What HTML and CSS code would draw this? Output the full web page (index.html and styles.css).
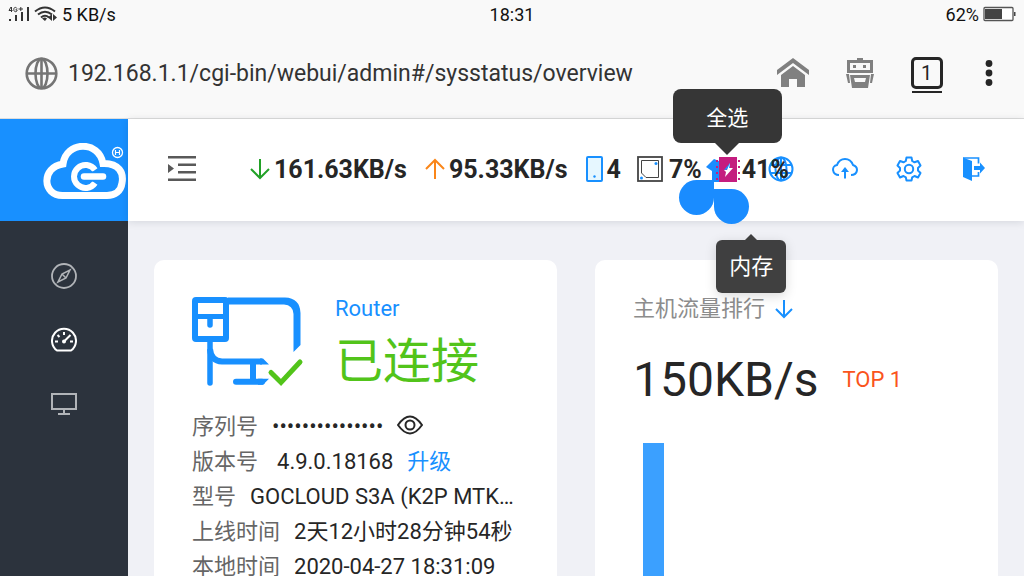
FILE: index.html
```html
<!DOCTYPE html>
<html lang="zh-CN">

<head>
    <meta charset="UTF-8">
    <meta name="viewport" content="width=device-width, initial-scale=1">
    <title>系统状态</title>
    <link rel="stylesheet" href="styles.css">
</head>

<body>
    <!-- 手机状态栏 -->
    <div class="phone-bar">
        <div class="phone-left">
            <svg width="22" height="16" viewBox="0 0 22 16">
                <g fill="none" stroke="#333" stroke-width="1">
                    <path d="M3 1L1 4.500H4.500M3.500 1V6M9 2.500C8 .8 5.800 1 5.800 3.500S8 6.200 9 5V3.800H7.500M10.500 3H15M12.800 1V5" />
                </g>
                <path fill="#333" d="M1 13h2v2H1zM7 9h2v6H7zM13 6h2v9h-2zM19 1h2v14h-2z" />
            </svg>
            <svg width="24" height="16" viewBox="0 0 24 16">
                <g fill="none" stroke="#333" stroke-width="2">
                    <path d="M1 5.500Q11 -2.500 21 5.500M4 8.500Q11 3 18 8.500M7 11.500Q11 8 15 11.500" />
                </g>
                <path fill="#333" d="M8 12.500Q11 10.500 13 12.500L11 15zM18 8v7l-4-3.500zM19 8v7l4-3.500z" />
            </svg>
            <span>5 KB/s</span>
        </div>
        <span class="phone-time">18:31</span>
        <div class="phone-right">
            <span>62%</span>
            <svg width="33" height="16" viewBox="0 0 33 16">
                <rect x="1" y="1.500" width="29" height="13" rx="1" fill="#fff" stroke="#555" stroke-width="1.300" />
                <path fill="#444" d="M2 3h17v10H2zM31 6h1.500v4H31z" />
            </svg>
        </div>
    </div>

    <!-- 地址栏 -->
    <div class="browser-bar">
        <svg class="site-icon" width="33" height="33" viewBox="0 0 33 33" fill="none" stroke="#757575" stroke-width="2.600">
            <circle cx="16.500" cy="16.500" r="14.800" />
            <ellipse cx="16.500" cy="16.500" rx="6" ry="14.800" />
            <path d="M2 16.500H31M16.500 2V31" />
        </svg>
        <input class="url" type="text" aria-label="网址" value="192.168.1.1/cgi-bin/webui/admin#/sysstatus/overview">
        <button class="tool" aria-label="主页">
            <svg width="34" height="32" viewBox="0 0 34 32" fill="#808080">
                <path d="M17 1L33 13V18L17 6L1 18V13z" />
                <path d="M17 9L29 18V30H21V22H13V30H5V18z" />
            </svg>
        </button>
        <button class="tool" aria-label="助手">
            <svg width="30" height="32" viewBox="0 0 30 32" fill="#808080">
                <path d="M12 1h6v3h-6z" />
                <path fill-rule="evenodd" d="M2 3h26v13H2zM5 6v7h20V6z" />
                <path d="M8 8h3v3H8zM18 8h3v3h-3zM1 17h3l1 9H3zM29 17h-3l-1 9h2z" />
                <path fill-rule="evenodd" d="M5 18h20l-2 13H7zM9 21l1 4h10l1-4z" />
            </svg>
        </button>
        <button class="tool" aria-label="标签页">
            <span class="tab-count">1</span>
        </button>
        <button class="tool tool-more" aria-label="更多">
            <svg width="8" height="28" viewBox="0 0 8 28" fill="#262626">
                <circle cx="4" cy="4.500" r="3.400" />
                <circle cx="4" cy="14" r="3.400" />
                <circle cx="4" cy="23.500" r="3.400" />
            </svg>
        </button>
    </div>

    <div class="layout">
        <aside class="sider">
            <a class="logo" href="#" aria-label="GOCLOUD">
                <svg width="84" height="58" viewBox="0 0 84 58" fill="none" stroke="#fff">
                    <path stroke-width="7" d="M20 52.500C-1 53 -2 24 20 21C23 -2 56 -3 60 20.500C76 20 81 30 79 40C78 48 72 52.500 64 52.500z" />
                    <path stroke-width="6" d="M52 27A11.500 11.500 0 1 0 52 40" />
                    <path stroke="#1890ff" stroke-width="10" d="M42 33.500H58" />
                    <path stroke-width="6.500" stroke-linecap="round" d="M41 33.500H60" />
                    <circle cx="74.500" cy="9.500" r="5" stroke-width="1.300" />
                    <path stroke-width="1.200" d="M72.500 7V12M76.500 7V12M72.500 9.500H76.500" />
                </svg>
            </a>
            <nav class="menu">
                <a href="#" aria-label="导航">
                    <svg width="26" height="26" viewBox="0 0 26 26" fill="none" stroke="currentColor">
                        <circle cx="13" cy="13" r="12" stroke-width="1.800" />
                        <path stroke-width="1.600" d="M19 7L15 15L7 19L11 11zM11 11L15 15" />
                    </svg>
                </a>
                <a class="active" href="#" aria-label="系统状态">
                    <svg width="26" height="26" viewBox="0 0 26 26" fill="none" stroke="currentColor" stroke-width="2">
                        <path d="M6 23.500A12 12 0 1 1 20 23.500z" />
                        <path d="M4 14.500H7M19 14.500H22M13 5V8M6.500 8L8.500 10M19.500 8L13 14.500" />
                        <circle cx="13" cy="14.500" r="1" />
                    </svg>
                </a>
                <a href="#" aria-label="设备">
                    <svg width="26" height="26" viewBox="0 0 26 26" fill="none" stroke="currentColor" stroke-width="2">
                        <path d="M1 3H25V18H1zM13 18V22M7 23H19" />
                    </svg>
                </a>
            </nav>
        </aside>

        <div class="page">
            <header class="header">
                <button class="fold" aria-label="展开菜单">
                    <svg width="30" height="28" viewBox="0 0 30 28" fill="#595959">
                        <path d="M1 1h28v2.500H1zM11 8.500h18V11H11zM11 16h18v2.500H11zM1 23.500h28V26H1zM1 9l6 4.500-6 4.500z" />
                    </svg>
                </button>
                <div class="stats">
                    <div class="stat">
                        <svg width="24" height="26" viewBox="0 0 24 26" fill="none" stroke="#22a127" stroke-width="2">
                            <path d="M12 3V22M3 13L12 22L21 13" />
                        </svg>
                        <span>161.63KB/s</span>
                    </div>
                    <div class="stat">
                        <svg width="24" height="26" viewBox="0 0 24 26" fill="none" stroke="#fa8619" stroke-width="2">
                            <path d="M12 23V4M3 13L12 4L21 13" />
                        </svg>
                        <span>95.33KB/s</span>
                    </div>
                    <div class="stat">
                        <svg width="21" height="26" viewBox="0 0 21 26">
                            <rect x="3" y="1" width="15" height="24" rx="1" fill="#e6f7ff" stroke="#1890ff" stroke-width="2" />
                            <circle cx="10.500" cy="20.500" r="1.200" fill="#1890ff" />
                        </svg>
                        <span>4</span>
                    </div>
                    <div class="stat stat-cpu">
                        <svg width="26" height="26" viewBox="0 0 26 26" fill="none" stroke="#444">
                            <rect x="1" y="1" width="24" height="24" stroke-width="1.800" />
                            <path d="M4.500 4.500H21.500V21.500H9L4.500 17z" />
                            <circle cx="19" cy="7.500" r="1.500" fill="#1890ff" stroke="none" />
                            <circle cx="4.500" cy="22" r="1.500" fill="#1890ff" stroke="none" />
                        </svg>
                        <span>7%</span>
                    </div>
                    <div class="stat stat-memory">
                        <div class="selection">
                            <svg width="28" height="26" viewBox="0 0 28 26">
                                <path fill="#c41d7f" d="M5 1h18v25H5zM2 4h2v2H2zM2 10h2v2H2zM2 16h2v2H2zM2 22h2v2H2zM24 4h2v2h-2zM24 10h2v2h-2zM24 16h2v2h-2zM24 22h2v2h-2z" />
                                <path fill="#1890ff" d="M16 7v6l-6 1z" />
                                <path fill="#fff" d="M16 7l-3 7h-3l2 2-1 5 8-9h-4z" />
                            </svg>
                            <svg class="caret" width="14" height="24" viewBox="0 0 14 24" fill="#1a8cff">
                                <path d="M8 1L13 3V24H6V13L0 9z" />
                            </svg>
                            <i class="handle handle-start"></i>
                            <i class="handle handle-end"></i>
                            <button class="select-all">全选</button>
                        </div>
                        <span>41%</span>
                        <div class="tooltip" role="tooltip">内存</div>
                    </div>
                </div>
                <nav class="actions">
                    <a href="#" aria-label="语言">
                        <svg width="26" height="26" viewBox="0 0 26 26" fill="none" stroke="#1890ff" stroke-width="2">
                            <circle cx="13" cy="13" r="11.500" />
                            <ellipse cx="13" cy="13" rx="5.500" ry="11.500" />
                            <path d="M13 1V25M2 9H24M2 17H24" />
                        </svg>
                    </a>
                    <a href="#" aria-label="云端">
                        <svg width="26" height="26" viewBox="0 0 26 26" fill="none" stroke="#1890ff" stroke-width="2">
                            <path d="M7 19C0 19 -1 10 5 9C8 1 18 1 21 9C27 11 26 19 19 19M13 22.500V13" />
                            <path fill="#1890ff" stroke="none" d="M13 11l4 5H9z" />
                        </svg>
                    </a>
                    <a href="#" aria-label="设置">
                        <svg width="26" height="26" viewBox="0 0 26 26" fill="none" stroke="#1890ff" stroke-width="2" stroke-linejoin="round">
                            <path d="M10.500 1.500H15.500L16.200 5L18.500 6.300L22 5L24.500 9.500L22 12V14.500L24.500 17L22 21.500L18.500 20L16.200 21.300L15.500 24.500H10.500L9.800 21.300L7.500 20L4 21.500L1.500 17L4 14.500V12L1.500 9.500L4 5L7.500 6.300L9.800 5z" />
                            <circle cx="13" cy="13" r="4.200" />
                        </svg>
                    </a>
                    <a href="#" aria-label="退出">
                        <svg width="26" height="26" viewBox="0 0 26 26" fill="#1890ff">
                            <path d="M3 1.500L12 5V25L3 21zM14 10h6V6.500l5 5.500-5 5.500V14h-6z" />
                            <path fill="none" stroke="#1890ff" stroke-width="1.700" d="M3 2H18.500V7.500M18.500 16V20H12" />
                        </svg>
                    </a>
                </nav>
            </header>

            <main class="content">
                <section class="card">
                    <div class="router">
                        <svg class="router-icon" width="112" height="92" viewBox="0 0 112 92" fill="none" stroke="#1890ff" stroke-width="6">
                            <rect x="3" y="3" width="31" height="39" rx="1" />
                            <path d="M3 19.500H34" stroke-width="5" />
                            <path d="M18 20V28M18 42V86" stroke-width="5.500" stroke-linecap="round" />
                            <path d="M18 52Q19 64 30 64.500H70M61 64V86" />
                            <path d="M44 84.700H70" stroke-linecap="round" />
                            <path fill="#1890ff" stroke="none" d="M36 .5H93Q108 1 108.500 16V48L101.500 55V17Q101 8 92 7.500H36zM68 61.500H71L77 67.500H68zM66 81.700H77L71 87.700H66z" />
                            <path stroke="#52c41a" stroke-width="5" stroke-linecap="round" d="M79 75.500L89 85.500L108 65" />
                        </svg>
                        <div>
                            <h2 class="router-name">Router</h2>
                            <p class="router-state">已连接</p>
                        </div>
                    </div>
                    <dl class="info">
                        <div class="row">
                            <dt>序列号</dt>
                            <dd>•••••••••••••••</dd>
                            <dd>
                                <button class="eye" aria-label="显示序列号">
                                    <svg width="26" height="22" viewBox="0 0 26 22" fill="none" stroke="#262626" stroke-width="2">
                                        <path d="M1 11Q13 -6 25 11Q13 28 1 11z" />
                                        <circle cx="13" cy="11" r="4.500" />
                                    </svg>
                                </button>
                            </dd>
                        </div>
                        <div class="row row-version">
                            <dt>版本号</dt>
                            <dd>4.9.0.18168</dd>
                            <dd><a href="#">升级</a></dd>
                        </div>
                        <div class="row">
                            <dt>型号</dt>
                            <dd class="model">GOCLOUD S3A (K2P MTK7621)</dd>
                        </div>
                        <div class="row">
                            <dt>上线时间</dt>
                            <dd>2天12小时28分钟54秒</dd>
                        </div>
                        <div class="row">
                            <dt>本地时间</dt>
                            <dd>2020-04-27 18:31:09</dd>
                        </div>
                    </dl>
                </section>

                <section class="card">
                    <h2 class="rank-title">主机流量排行
                        <svg width="20" height="20" viewBox="0 0 20 20" fill="none" stroke="#1890ff" stroke-width="2">
                            <path d="M10 1V18M2 10L10 18L18 10" />
                        </svg>
                    </h2>
                    <p class="rank-value"><span>150KB/s</span><em>TOP 1</em></p>
                    <div class="chart">
                        <div class="bar"></div>
                    </div>
                </section>
            </main>
        </div>
    </div>
</body>

</html>
```

FILE: styles.css
```css
* {
    padding: 0;
    margin: 0;
    box-sizing: border-box;
}

body {
    display: flex;
    flex-direction: column;
    height: 100vh;
    overflow: hidden;
    font-family: Roboto, "Noto Sans CJK SC", sans-serif;
    font-size: 22px;
    color: #262626;
    background: #f9f9f9;
}

svg {
    display: block;
    flex: none;
}

a {
    color: #1890ff;
    text-decoration: none;
}

button {
    border: 0;
    background: none;
    font: inherit;
    color: inherit;
    cursor: pointer;
}

/* 手机状态栏 */
.phone-bar {
    display: grid;
    grid-template-columns: 1fr auto 1fr;
    align-items: center;
    height: 28px;
    padding: 0 8px;
    font-size: 18px;
    color: #111;
}

.phone-left,
.phone-right {
    display: flex;
    align-items: center;
    gap: 4px;
}

.phone-right {
    justify-content: flex-end;
}

/* 地址栏 */
.browser-bar {
    display: flex;
    align-items: center;
    height: 91px;
    padding: 0 6px 0 25px;
    border-bottom: 1px solid #ddd;
}

.url {
    flex: 1;
    min-width: 0;
    margin-left: 10px;
    border: 0;
    outline: none;
    background: none;
    font: inherit;
    font-size: 23px;
    color: #333;
}

.tool {
    display: flex;
    justify-content: center;
    width: 67px;
}

.tool-more {
    width: 58px;
}

.tab-count {
    position: relative;
    width: 32px;
    height: 32px;
    border: 3px solid #262626;
    border-radius: 5px;
    line-height: 26px;
    font-size: 20px;
}

.tab-count::after {
    content: "";
    position: absolute;
    left: -2px;
    right: -2px;
    bottom: -7px;
    height: 2px;
    background: #262626;
}

/* 整体布局 */
.layout {
    display: flex;
    flex: 1;
    min-height: 0;
}

.sider {
    flex: none;
    width: 128px;
    background: #2c333d;
}

.logo {
    display: flex;
    justify-content: flex-end;
    align-items: center;
    height: 102px;
    padding: 3px 1px 0 0;
    background: #1890ff;
}

.menu {
    padding-top: 23px;
}

.menu a {
    display: flex;
    justify-content: center;
    align-items: center;
    height: 64px;
    color: #b1b4b8;
}

.menu .active {
    color: #fff;
}

.page {
    display: flex;
    flex-direction: column;
    flex: 1;
    min-width: 0;
    background: #f0f1f6;
}

/* 顶部 */
.header {
    display: flex;
    align-items: center;
    flex: none;
    height: 102px;
    padding: 0 19px 2px 39px;
    background: #fff;
    box-shadow: 0 1px 8px rgba(0, 21, 41, .12);
}

.stats {
    position: relative;
    z-index: 1;
    display: flex;
    flex: 1;
    gap: 16px;
    min-width: 0;
    padding-left: 51px;
    white-space: nowrap;
}

.stat {
    display: flex;
    align-items: center;
    flex: none;
    gap: 2px;
    font-size: 25px;
    font-weight: bold;
}

.stat-cpu {
    gap: 6px;
}

.stat-memory {
    position: relative;
    gap: 0;
    margin-left: -4px;
}

.selection {
    position: relative;
}

.actions {
    display: flex;
    flex: none;
}

.actions a {
    display: flex;
    justify-content: center;
    width: 64px;
}

/* 文字选择手柄和弹出菜单 */
.caret {
    position: absolute;
    left: -8px;
    top: 2px;
    z-index: -1;
}

.handle {
    position: absolute;
    width: 35px;
    height: 35px;
    border-radius: 50%;
    background: #1a8cff;
}

.handle-start {
    right: 28px;
    top: 24px;
    border-top-right-radius: 0;
}

.handle-end {
    left: 0;
    top: 33px;
    border-top-left-radius: 0;
}

.select-all {
    position: absolute;
    left: 50%;
    bottom: 39px;
    width: 109px;
    height: 54px;
    margin-left: -55px;
    border-radius: 8px;
    background: #363636;
    color: #fff;
    font-size: 21px;
    font-weight: normal;
}

.select-all::after {
    content: "";
    position: absolute;
    left: 50%;
    top: 100%;
    margin-left: -12px;
    border: 12px solid transparent;
    border-bottom: 0;
    border-top-color: #363636;
}

.tooltip {
    position: absolute;
    left: 50%;
    top: 85px;
    width: 70px;
    margin-left: -35px;
    padding: 10px 0;
    border-radius: 6px;
    background: rgba(50, 50, 50, .93);
    box-shadow: 0 3px 12px rgba(0, 0, 0, .15);
    color: #fff;
    font-size: 22px;
    font-weight: normal;
    line-height: 33px;
    text-align: center;
}

.tooltip::before {
    content: "";
    position: absolute;
    left: 50%;
    bottom: 100%;
    margin-left: -6px;
    border: 6px solid transparent;
    border-top: 0;
    border-bottom-color: rgba(50, 50, 50, .93);
}

/* 内容卡片 */
.content {
    display: grid;
    grid-template-columns: 1fr 1fr;
    gap: 38px;
    flex: 1;
    min-height: 0;
    padding: 39px 26px 0;
    overflow: hidden;
}

.card {
    min-width: 0;
    padding: 34px 38px;
    border-radius: 10px 10px 0 0;
    background: #fff;
}

.router {
    display: flex;
    align-items: flex-start;
    gap: 31px;
}

.router-icon {
    margin-top: 3px;
}

.router-name,
.rank-title {
    font-size: 22px;
    font-weight: normal;
    line-height: 30px;
}

.router-name {
    color: #1890ff;
}

.router-state {
    font-size: 48px;
    line-height: 76px;
    color: #52c41a;
}

.info {
    margin-top: 9px;
    line-height: 35px;
}

.row {
    display: flex;
    gap: 14px;
    height: 35px;
    white-space: nowrap;
}

.row-version dt {
    margin-right: 5px;
}

dt {
    flex: none;
    color: #666;
}

.model {
    overflow: hidden;
    text-overflow: ellipsis;
}

.eye {
    display: flex;
    align-items: center;
    height: 32px;
}

.rank-title {
    display: flex;
    align-items: center;
    gap: 9px;
    color: #8c8c8c;
}

.rank-value {
    display: flex;
    align-items: center;
    gap: 24px;
    margin-top: 24px;
    font-size: 48px;
    line-height: 64px;
}

.rank-value em {
    font-size: 22px;
    font-style: normal;
    color: #fa541c;
}

.chart {
    margin-top: 31px;
    padding-left: 10px;
}

.bar {
    width: 21px;
    height: 240px;
    background: #3ba0ff;
}
```
